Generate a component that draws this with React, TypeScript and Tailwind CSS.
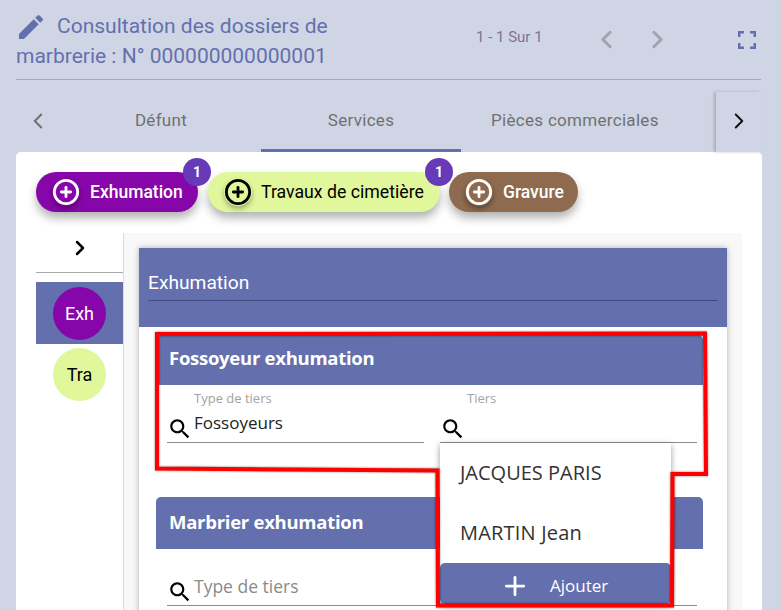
import { ChevronLeft, ChevronRight, CirclePlus, Plus } from "lucide-react";

function SearchIcon() {
  return (
    <svg viewBox="0 0 24 24" className="h-[26px] w-[26px] shrink-0 fill-black">
      <path d="M15.5 14h-.79l-.28-.27C15.41 12.59 16 11.11 16 9.5 16 5.91 13.09 3 9.5 3S3 5.91 3 9.5 5.91 16 9.5 16c1.61 0 3.09-.59 4.23-1.57l.27.28v.79l5 4.99L20.49 19l-4.99-5zm-6 0C7.01 14 5 11.99 5 9.5S7.01 5 9.5 5 14 7.01 14 9.5 11.99 14 9.5 14z" />
    </svg>
  );
}

function Chip({
  label,
  count,
  className,
  iconClass,
  textClass,
}: {
  label: string;
  count?: number;
  className: string;
  iconClass: string;
  textClass: string;
}) {
  return (
    <div
      className={`relative flex h-10 items-center rounded-[20px] pl-[16px] shadow-[0_6px_10px_rgba(0,0,0,0.3)] ${className}`}
    >
      <span className={`flex h-[28px] w-[28px] items-center justify-center rounded-full ${iconClass}`}>
        <CirclePlus size={28} strokeWidth={2.4} />
      </span>
      <span className={textClass}>{label}</span>
      {count !== undefined && (
        <span className="absolute right-[-13px] top-[-14px] flex h-[28px] w-[28px] items-center justify-center rounded-full bg-[#673ab7] text-[14px] font-bold text-white">
          {count}
        </span>
      )}
    </div>
  );
}

function TierField({ label, value, placeholder }: { label?: string; value?: string; placeholder?: string }) {
  return (
    <div className="flex-1">
      <div className="h-[12px] pl-[27px] text-[13px] leading-[12px] text-[#a3a3a3]">{label}</div>
      <div className="flex h-[39px] items-end border-b border-[#8e8e8e]">
        <SearchIcon />
        <span
          className={`ml-[1px] pb-[8px] leading-[22px] ${placeholder ? "text-[17.5px] text-[#8a8a8a]" : "text-[17px] text-[#222]"}`}
        >
          {value ?? placeholder}
        </span>
      </div>
    </div>
  );
}

export default function App() {
  return (
    <div className="relative h-[610px] w-[781px] overflow-hidden bg-[#d0d5e6] font-['Roboto',sans-serif]">
      <div className="mx-[16px] flex h-[80px] w-[745px] border-b border-[#a8a8a8] pt-[11px]">
        <div className="w-[350px] text-[21px] leading-[30px] text-[#6370ad]">
          <svg
            viewBox="0 0 24 24"
            className="-my-[8px] ml-[-1px] mr-[10px] inline-block h-[32px] w-[32px] fill-[#6370ad] align-middle"
          >
            <path d="M3 17.25V21h3.75L17.81 9.94l-3.75-3.75L3 17.25zM20.71 7.04a1 1 0 0 0 0-1.41l-2.34-2.34a1 1 0 0 0-1.41 0l-1.83 1.83 3.75 3.75 1.83-1.83z" />
          </svg>
          Consultation des dossiers de marbrerie : N° 000000000000001
        </div>
        <div className="ml-[110px] pt-[16px] text-[15px] leading-[20px] text-[#7c7396]">1 - 1 Sur 1</div>
        <div className="ml-[49px] flex gap-[22px] pt-[14px] text-[#a0a3b2]">
          <ChevronLeft size={29} strokeWidth={2.5} />
          <ChevronRight size={29} strokeWidth={2.5} />
        </div>
        <svg viewBox="0 0 18 18" className="ml-[66px] mt-[20px] h-[18px] w-[18px] fill-[#6370ad]">
          <path d="M0 0h6v2.500H2.500V6H0zM12 0h6v6h-2.500V2.500H12zM0 12h2.500v3.500H6V18H0zM15.500 12H18v6h-6v-2.500h3.500z" />
        </svg>
      </div>

      <div className="ml-[16px] mt-[12px] flex h-[60px] w-[745px] text-[#707070]">
        <div className="flex w-[45px] items-center justify-center pb-[3px] pr-[2px]">
          <ChevronLeft size={26} strokeWidth={1.8} />
        </div>
        <div className="flex w-[200px] items-center justify-center pb-[3px] text-[17px] tracking-[0.3px]">Défunt</div>
        <div className="flex w-[200px] items-center justify-center border-b-[3px] border-[#6370ad] text-[17px] tracking-[0.3px]">
          Services
        </div>
        <div className="flex w-[255px] items-center justify-start pb-[3px] pl-[30px] text-[17px] tracking-[0.3px]">
          Pièces commerciales
        </div>
        <div className="flex w-[45px] items-center justify-center pb-[3px] text-[#111] shadow-[-2px_0_3px_rgba(0,0,0,0.2)]">
          <ChevronRight size={26} strokeWidth={1.8} />
        </div>
      </div>

      <div className="ml-[16px] w-[746px] rounded-t-[5px] bg-white pt-[20px]">
        <div className="ml-[20px] flex gap-[10px]">
          <Chip
            label="Exhumation"
            count={1}
            className="w-[162px] bg-[#8706a9] text-white"
            iconClass="text-white shadow-[0_3px_5px_rgba(0,0,0,0.35)]"
            textClass="ml-[10px] text-[17.5px] font-medium"
          />
          <Chip
            label="Travaux de cimetière"
            count={1}
            className="w-[232px] bg-[#e1f79b] text-black"
            iconClass="text-black shadow-[0_3px_5px_rgba(0,0,0,0.3)]"
            textClass="ml-[9px] text-[17.7px]"
          />
          <Chip
            label="Gravure"
            className="ml-[-1px] w-[129px] bg-[#8e6b4f] text-white"
            iconClass="text-white shadow-[0_3px_5px_rgba(0,0,0,0.35)]"
            textClass="ml-[10px] text-[17.5px] font-medium"
          />
        </div>

        <div className="ml-[20px] mt-[21px] flex">
          <div className="w-[87px]">
            <div className="flex h-[40px] items-center justify-center border-b border-[#a8a8a8] pb-[10px] text-black">
              <ChevronRight size={24} strokeWidth={2.5} />
            </div>
            <div className="mt-[9px] flex h-[62px] items-center justify-center bg-[#6370ad]">
              <span className="flex h-[53px] w-[53px] items-center justify-center rounded-full bg-[#8706a9] text-[18px] text-white">
                Exh
              </span>
            </div>
            <div className="mt-[4px] flex justify-center">
              <span className="flex h-[53px] w-[53px] items-center justify-center rounded-full bg-[#e1f79b] text-[18px] text-black">
                Tra
              </span>
            </div>
          </div>

          <div className="h-[400px] w-[619px] border-l border-[#dcdcdc] bg-[#f8f8f8] pl-[15px] pt-[15px]">
            <div className="h-[400px] w-[588px] bg-white shadow-[0_0_6px_rgba(0,0,0,0.3)]">
              <div className="h-[79px] bg-[#6370ad] px-[9px] pt-[22px] text-white">
                <div className="h-[31px] border-b border-[#3f4a80] text-[19.2px] leading-[25px]">Exhumation</div>
              </div>

              <div className="font-['Open_Sans',sans-serif]">
                <div className="ml-[17px] mt-[8px] h-[134px] w-[547px] rounded-[5px] bg-white">
                  <div className="flex h-[50px] items-center rounded-t-[5px] bg-[#6370ad] pb-[4px] pl-[13px] text-[18.5px] font-bold tracking-[-0.27px] text-white">
                    Fossoyeur exhumation
                  </div>
                  <div className="flex gap-[16px] pl-[11px] pr-[6px] pt-[7px]">
                    <TierField label="Type de tiers" value="Fossoyeurs" />
                    <TierField label="Tiers" />
                  </div>
                </div>

                <div className="ml-[17px] mt-[28px] h-[200px] w-[547px] rounded-[5px] bg-white">
                  <div className="flex h-[52px] items-center rounded-t-[5px] bg-[#6370ad] pb-[2px] pl-[13px] text-[18.5px] font-bold tracking-[-0.27px] text-white">
                    Marbrier exhumation
                  </div>
                  <div className="pl-[11px] pr-[6px] pt-[6px]">
                    <TierField placeholder="Type de tiers" />
                  </div>
                </div>
              </div>
            </div>
          </div>
        </div>
      </div>

      {/* dropdown list over the form */}
      <div className="absolute left-[440px] top-[443px] h-[161px] w-[231px] rounded-b-[5px] bg-white font-['Open_Sans',sans-serif] shadow-[0_2px_6px_rgba(0,0,0,0.4)]">
        <div className="flex h-[60px] items-center pl-[20px] text-[20px] text-[#333]">JACQUES PARIS</div>
        <div className="flex h-[60px] items-center pl-[20px] text-[20px] tracking-[0.2px] text-[#333]">MARTIN Jean</div>
        <div className="flex h-[41px] items-center rounded-[5px] bg-[#6370ad] pl-[60px] pt-[4px] text-[17px] font-medium text-white">
          <Plus size={30} strokeWidth={2.2} />
          <span className="ml-[20px]">Ajouter</span>
        </div>
      </div>

      {/* red annotation drawn on the screenshot */}
      <svg
        viewBox="0 0 781 610"
        className="pointer-events-none absolute left-0 top-0 h-[610px] w-[781px] fill-none [filter:drop-shadow(0_0_1px_rgba(0,0,0,0.5))]"
      >
        <path
          d="M157 334 L705 333.500 L706 474 L672.500 474 L672 605.500 L438 605.500 L437.500 470.500 L157 468.500 Z"
          stroke="#ff0000"
          strokeWidth="4"
          strokeLinejoin="miter"
        />
      </svg>
    </div>
  );
}
